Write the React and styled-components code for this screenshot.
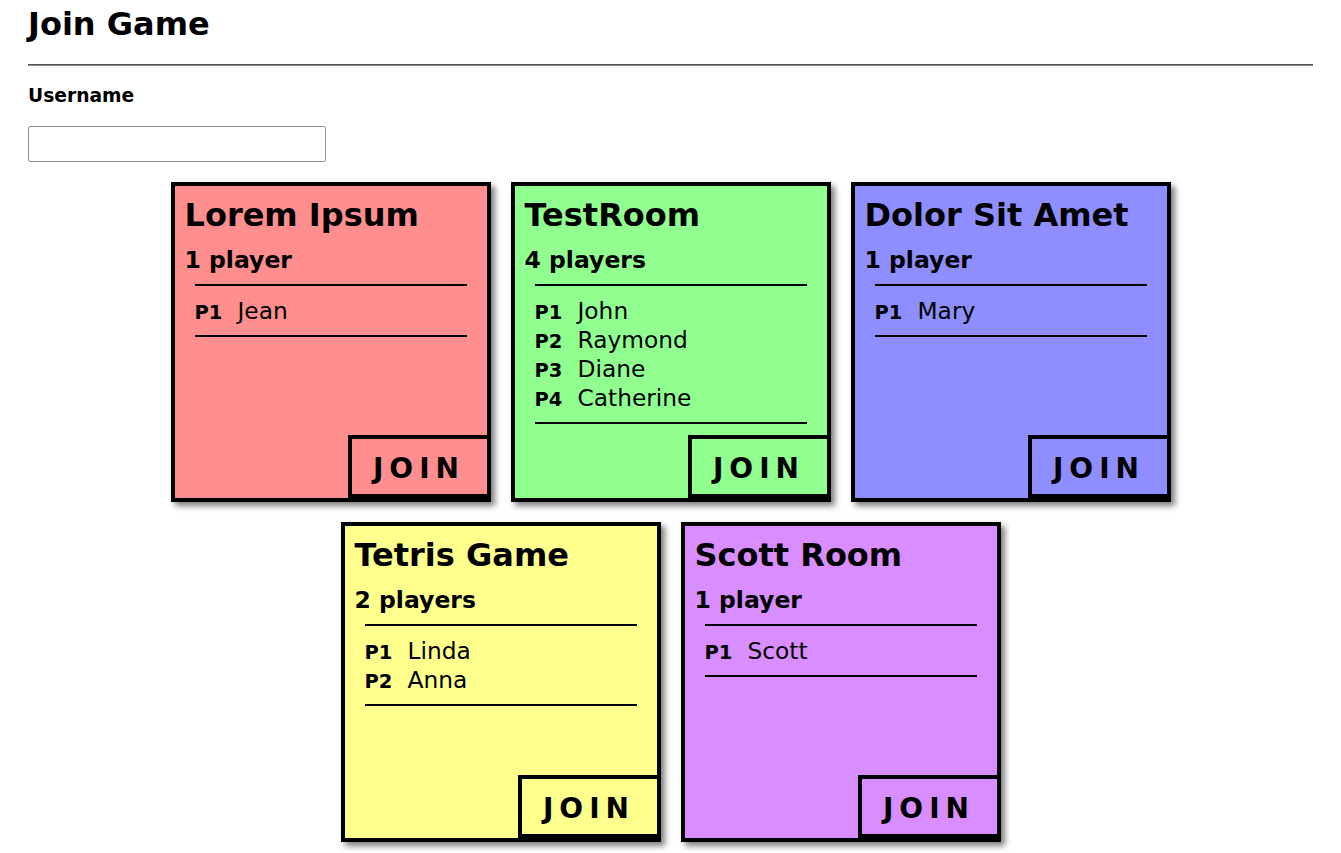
import React from "react";
import styled, { createGlobalStyle } from "styled-components";

const rooms = [
  { id: 1, name: "Lorem Ipsum", color: "#ff8e8e", players: ["Jean"] },
  { id: 2, name: "TestRoom", color: "#90ff90", players: ["John", "Raymond", "Diane", "Catherine"] },
  { id: 3, name: "Dolor Sit Amet", color: "#8e8eff", players: ["Mary"] },
  { id: 4, name: "Tetris Game", color: "#ffff8e", players: ["Linda", "Anna"] },
  { id: 5, name: "Scott Room", color: "#d98eff", players: ["Scott"] },
];

const GlobalStyle = createGlobalStyle`
  body {
    margin: 8px;
    font-family: "DejaVu Sans", Verdana, sans-serif;
    color: #000;
    background: #fff;
  }
`;

const App = () => {
  return (
    <>
      <GlobalStyle />
      <Page>
        <Title>Join Game</Title>
        <Rule />
        <Label htmlFor="username">Username</Label>
        <UsernameInput id="username" type="text" />
        <Rooms>
          {rooms.map((room) => (
            <Card key={room.id} color={room.color}>
              <RoomName>{room.name}</RoomName>
              <PlayerCount>
                {room.players.length} {room.players.length === 1 ? "player" : "players"}
              </PlayerCount>
              <PlayerList>
                {room.players.map((player, i) => (
                  <PlayerRow key={player}>
                    <Slot>P{i + 1}</Slot>
                    <PlayerName>{player}</PlayerName>
                  </PlayerRow>
                ))}
              </PlayerList>
              <JoinButton color={room.color}>JOIN</JoinButton>
            </Card>
          ))}
        </Rooms>
      </Page>
    </>
  );
};

export default App;

const Page = styled.div`
  padding: 0 20px;
`;

const Title = styled.h1`
  margin: 0;
  font-size: 32px;
  line-height: 32px;
  font-weight: bold;
`;

const Rule = styled.hr`
  margin: 24px 0 19px;
  border: none;
  border-top: 1px solid #555;
  border-bottom: 1px solid #888;
`;

const Label = styled.label`
  display: block;
  font-size: 18.7px;
  font-weight: bold;
`;

const UsernameInput = styled.input`
  display: block;
  margin-top: 20px;
  width: 298px;
  height: 36px;
  box-sizing: border-box;
  border: 1px solid #8f8f9d;
  border-radius: 2px;
  font-family: inherit;
`;

const Rooms = styled.div`
  display: flex;
  flex-wrap: wrap;
  justify-content: center;
  margin-top: 10px;
`;

const Card = styled.div`
  position: relative;
  box-sizing: border-box;
  width: 320px;
  height: 320px;
  margin: 10px;
  padding: 10px;
  border: 4px solid #000;
  background-color: ${(props) => props.color};
  box-shadow: 4px 4px 6px rgba(0, 0, 0, 0.5);
`;

const RoomName = styled.h2`
  margin: 0;
  font-size: 32px;
  font-weight: bold;
`;

const PlayerCount = styled.div`
  margin-top: 12px;
  font-size: 23.5px;
  font-weight: bold;
`;

const PlayerList = styled.div`
  margin: 10px 10px 0;
  padding: 10px 0;
  border-top: 2px solid #000;
  border-bottom: 2px solid #000;
`;

const PlayerRow = styled.div`
  display: flex;
  align-items: baseline;
  height: 29px;
  line-height: 29px;
`;

const Slot = styled.span`
  width: 43px;
  flex-shrink: 0;
  font-size: 19.5px;
  font-weight: bold;
`;

const PlayerName = styled.span`
  font-size: 23.3px;
`;

const JoinButton = styled.button`
  position: absolute;
  right: -4px;
  bottom: 0;
  box-sizing: border-box;
  width: 143px;
  height: 63px;
  padding: 4px 0 0 0;
  border: 4px solid #000;
  background-color: ${(props) => props.color};
  font-family: inherit;
  font-size: 28px;
  font-weight: bold;
  letter-spacing: 6px;
  color: #000;
  cursor: pointer;
`;
